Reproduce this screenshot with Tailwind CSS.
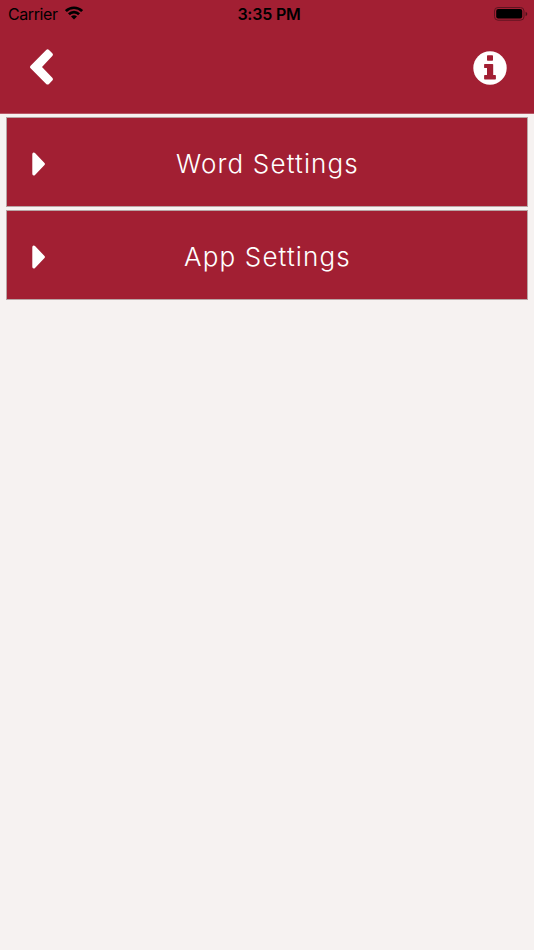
<!DOCTYPE html>
<html lang="en">
<head>
<meta charset="utf-8">
<title>Settings</title>
<script src="https://cdn.jsdelivr.net/npm/@tailwindcss/browser@4"></script>
</head>
<body class="min-h-screen bg-[#f6f2f1] font-['Inter',sans-serif]">
<header class="h-[114px] bg-[#a21f33] border-b border-[#b95766]">
  <div class="grid grid-cols-3 items-center h-7 pl-2 pr-[6px] text-black">
    <div class="flex items-center gap-[7px]">
      <span class="text-[16px] leading-7 tracking-[-0.42px]">Carrier</span>
      <svg class="w-[18px] h-[14px] -mt-[2px]" viewBox="0 0 18 14" fill="none" stroke="#000" stroke-width="2.7"><path d="M.9 5.1a11.5 11.5 0 0 1 16.2 0M3.9 8.3a7.2 7.2 0 0 1 10.2 0"/><path d="M9 13.5 6 10.6a4.3 4.3 0 0 1 6 0z" fill="#000" stroke="none"/></svg>
    </div>
    <span class="text-center text-[16px] leading-7 font-semibold tracking-[-0.2px] pl-[2px]">3:35 PM</span>
    <svg class="justify-self-end w-[34px] h-[14px] -mt-px" viewBox="0 0 34 14"><rect x=".5" y=".5" width="29.5" height="12.7" rx="3.5" fill="none" stroke="#5e1420"/><rect x="2.2" y="2.1" width="26" height="9.5" rx="2" fill="#000"/><path d="M31.6 4.7c2.2.8 2.2 3.6 0 4.4z" fill="#4c101a"/></svg>
  </div>
  <div class="flex justify-between items-start pt-[21px] pl-[30px] pr-[27px]">
    <svg class="w-[23px] h-[36px]" viewBox="0 0 23 36" fill="#fff"><path d="M.6 16.7 16.2.9q1.4-1.3 2.8 0l3.3 3.3q1.3 1.4 0 2.8L12 18 22.3 28.8q1.3 1.4 0 2.8L19 34.9q-1.4 1.3-2.8 0L.6 19.3q-1.2-1.3 0-2.6z"/></svg>
    <svg class="mt-[2px] w-[34px] h-[34px]" viewBox="0 0 34 34"><circle cx="17" cy="17" r="16.7" fill="#fff"/><g fill="#a21f33"><rect x="14" y="4.2" width="6" height="5.5" rx=".7"/><path d="M11.8 12.9h7.7q.7 0 .7.7v10.5h2q.7 0 .7.7v2.9q0 .7-.7.7H11.8q-.7 0-.7-.7v-2.9q0-.7.7-.7H14v-7h-2.2q-.7 0-.7-.7v-2.8q0-.7.7-.7z"/></g></svg>
  </div>
</header>
<main class="flex flex-col gap-[3px] px-[6px] pt-[3px]">
  <section class="flex items-center h-[90px] px-[25px] pt-[3px] bg-[#a21f33] border-[1.5px] border-[#b9a5a6] text-white">
    <svg class="w-[13px] h-6 shrink-0" viewBox="0 0 13 24" fill="#fff"><path d="M.3 2.2Q.3.2 1.9.4q.6 0 1.1.5l9.5 10q.9 1.1 0 2.2L3 23.1q-.5.5-1.1.5Q.3 23.8.3 21.8z"/></svg>
    <h2 class="flex-1 text-center whitespace-nowrap text-[26px] leading-8 font-light tracking-[1.15px] pr-[12px] pt-[1px]">Word Settings</h2>
  </section>
  <section class="flex items-center h-[90px] px-[25px] pt-[3px] bg-[#a21f33] border-[1.5px] border-[#b9a5a6] text-white">
    <svg class="w-[13px] h-6 shrink-0" viewBox="0 0 13 24" fill="#fff"><path d="M.3 2.2Q.3.2 1.9.4q.6 0 1.1.5l9.5 10q.9 1.1 0 2.2L3 23.1q-.5.5-1.1.5Q.3 23.8.3 21.8z"/></svg>
    <h2 class="flex-1 text-center whitespace-nowrap text-[26px] leading-8 font-light tracking-[1.15px] pr-[12px] pt-[1px]">App Settings</h2>
  </section>
</main>
</body>
</html>
